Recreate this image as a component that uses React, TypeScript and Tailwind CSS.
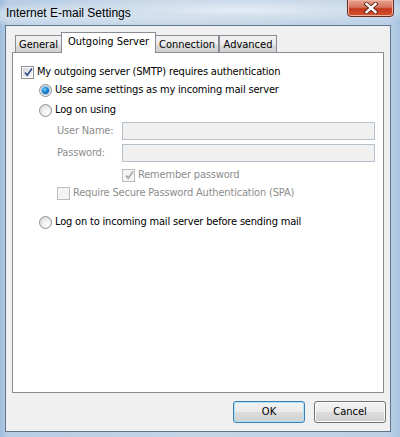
import React from "react";

const bodyFont = { fontFamily: '"DejaVu Sans Condensed", "Liberation Sans", sans-serif' };

function CheckBox({ checked, disabled }: { checked?: boolean; disabled?: boolean }) {
  return (
    <span
      className={
        "relative inline-flex w-[13px] h-[13px] shrink-0 border items-center justify-center " +
        (disabled ? "border-[#bcbcbc] bg-[#f4f4f4]" : "border-[#8e8f8f] bg-white")
      }
    >
      <span
        className={
          "w-[9px] h-[9px] " +
          (disabled
            ? "bg-[#f4f4f4]"
            : "bg-[linear-gradient(135deg,#cbcfd5_0%,#e9ebee_50%,#f6f6f6_100%)]")
        }
      />
      {checked && (
        <svg className="absolute left-[1px] top-[0px]" width="11" height="11" viewBox="0 0 11 11">
          <path
            d="M2 5.5 L4.2 8.3 L9 1.5"
            fill="none"
            stroke={disabled ? "#a8a8a8" : "#3a4f8f"}
            strokeWidth="1.7"
          />
        </svg>
      )}
    </span>
  );
}

function Radio({ checked }: { checked?: boolean }) {
  return (
    <span className="relative inline-flex w-[13px] h-[13px] shrink-0 rounded-full border border-[#8e8f8f] bg-[radial-gradient(circle_at_65%_70%,#ffffff_0%,#f0f0f0_40%,#c9ccd1_100%)] items-center justify-center">
      {checked && (
        <span className="w-[7px] h-[7px] rounded-full bg-[radial-gradient(circle_at_40%_35%,#7fd3ff_0%,#1a8ad6_40%,#0b3f8e_100%)] shadow-[0_0_0_1px_#8cc3e8]" />
      )}
    </span>
  );
}

function Tab({ label, selected, width }: { label: string; selected?: boolean; width: number }) {
  const w: Record<number, string> = {
    47: "w-[47px]",
    95: "w-[95px]",
    64: "w-[64px]",
    58: "w-[58px]",
  };
  return (
    <div
      className={
        w[width] +
        " shrink-0 flex items-center justify-center border-l border-t border-r border-[#898c95] text-[11px] text-black " +
        (selected
          ? "relative z-10 h-[21px] bg-white -mx-px pb-[2px]"
          : "h-[18px] bg-[linear-gradient(#f2f2f2,#ebebeb_50%,#dddddd_50%,#cfcfcf)] pt-[1px]")
      }
    >
      {label}
    </div>
  );
}

function Button({ label, isDefault }: { label: string; isDefault?: boolean }) {
  return (
    <div
      className={
        "w-[72px] h-[22px] rounded-[3px] border flex items-center justify-center text-[11px] text-black bg-[linear-gradient(#f2f2f2,#ebebeb_50%,#dddddd_50%,#cfcfcf)] " +
        (isDefault
          ? "border-[#3c7fb1] shadow-[inset_0_0_0_1px_#a7e3fb]"
          : "border-[#707070] shadow-[inset_0_0_0_1px_#fcfcfc]")
      }
    >
      {label}
    </div>
  );
}

export default function App() {
  return (
    <div
      className="relative w-[400px] h-[437px] overflow-hidden flex flex-col bg-[linear-gradient(90deg,#9fbddc_0%,#b7cde4_2%,#c4d5e7_50%,#bcd0e5_97%,#a8c4e0_100%)]"
      style={bodyFont}
    >
      {/* title bar */}
      <div className="h-[25px] flex justify-between bg-[radial-gradient(ellipse_at_60%_40%,#e6edf5_0%,#d2dfec_30%,transparent_70%),radial-gradient(ellipse_at_20%_60%,#dae5f0_0%,transparent_60%)]">
        <div
          className="self-center pl-[6px] pt-[1px] text-[12px] text-black"
          style={{ fontFamily: '"Liberation Sans", sans-serif' }}
        >
          Internet E-mail Settings
        </div>
        <div className="mr-[6px] w-[47px] h-[18px] -mt-px rounded-b-[4px] border border-[#6b2a22] bg-[linear-gradient(#e8a493_0%,#d7735e_45%,#c4391e_55%,#d6532f_100%)] shadow-[inset_0_0_0_1px_#f0b4a4] flex items-center justify-center">
          <svg width="16" height="12" viewBox="0 0 16 12">
            <path d="M3.5 2 L12.5 10 M12.5 2 L3.5 10" stroke="#5a2015" strokeWidth="4.2" strokeLinecap="square" />
            <path d="M3.5 2 L12.5 10 M12.5 2 L3.5 10" stroke="#ffffff" strokeWidth="2.4" strokeLinecap="square" />
          </svg>
        </div>
      </div>

      {/* client area */}
      <div className="ml-[5px] w-[386px] h-[407px] border border-[#5f7590] bg-[#f0f0f0] flex flex-col">
        {/* tab strip */}
        <div className="mt-[6px] ml-[9px] flex items-end h-[21px]">
          <Tab label="General" width={47} />
          <Tab label="Outgoing Server" width={95} selected />
          <Tab label="Connection" width={64} />
          <Tab label="Advanced" width={58} />
        </div>

        {/* panel */}
        <div className="-mt-px ml-[6px] w-[372px] h-[341px] border border-[#898c95] bg-white flex flex-col text-[11px] tracking-[-0.18px] text-black">
          <div className="mt-[11px] ml-[8px] h-[16px] flex items-center gap-[3px]">
            <CheckBox checked />
            <span>My outgoing server (SMTP) requires authentication</span>
          </div>
          <div className="mt-[2px] ml-[26px] h-[16px] flex items-center gap-[3px]">
            <Radio checked />
            <span>Use same settings as my incoming mail server</span>
          </div>
          <div className="mt-[4px] ml-[26px] h-[16px] flex items-center gap-[3px]">
            <Radio />
            <span>Log on using</span>
          </div>
          <div className="mt-[4px] ml-[44px] h-[18px] flex items-center">
            <span className="w-[65px] text-[#8d8d8d]">User Name:</span>
            <div className="w-[253px] h-[18px] border border-[#b5c0cb] bg-[#f0f0f0]" />
          </div>
          <div className="mt-[4px] ml-[44px] h-[18px] flex items-center">
            <span className="w-[65px] text-[#8d8d8d]">Password:</span>
            <div className="w-[253px] h-[18px] border border-[#b5c0cb] bg-[#f0f0f0]" />
          </div>
          <div className="mt-[5px] ml-[109px] h-[16px] flex items-center gap-[3px] text-[#8d8d8d]">
            <CheckBox checked disabled />
            <span>Remember password</span>
          </div>
          <div className="mt-[2px] ml-[44px] h-[16px] flex items-center gap-[3px] text-[#8d8d8d]">
            <CheckBox disabled />
            <span>Require Secure Password Authentication (SPA)</span>
          </div>
          <div className="mt-[13px] ml-[26px] h-[16px] flex items-center gap-[3px]">
            <Radio />
            <span>Log on to incoming mail server before sending mail</span>
          </div>
        </div>

        {/* buttons */}
        <div className="mt-[8px] pr-[4px] flex justify-end gap-[9px]">
          <Button label="OK" isDefault />
          <Button label="Cancel" />
        </div>
      </div>
    </div>
  );
}
